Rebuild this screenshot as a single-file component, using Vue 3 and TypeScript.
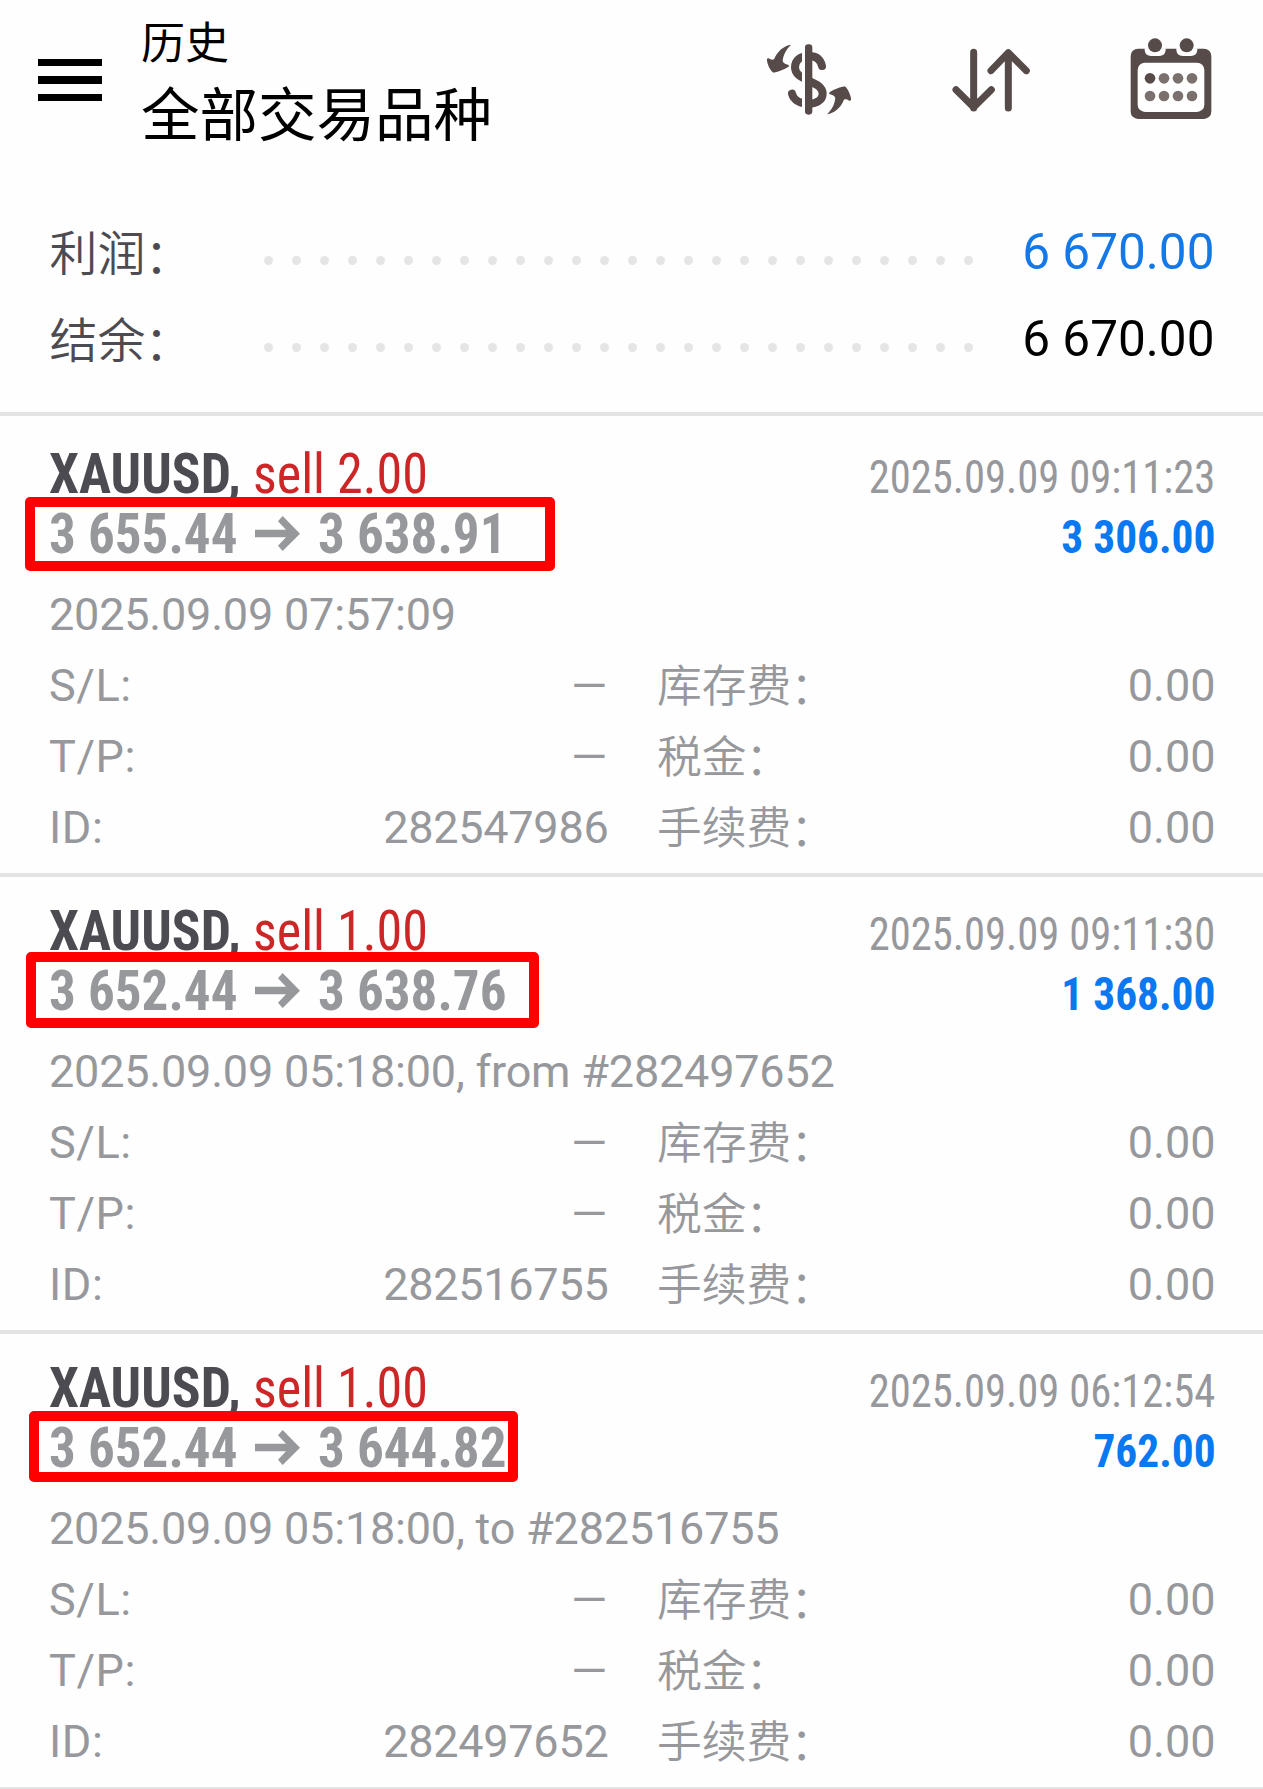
<script setup lang="ts">
interface Mark { left: number; top: number; width: number; height: number }
interface Deal {
  symbol: string
  action: string
  closeTime: string
  open: string
  close: string
  profit: string
  note: string
  id: string
  mark: Mark
}

const summary = [
  { label: '利润', value: '6 670.00', tone: 'blue' },
  { label: '结余', value: '6 670.00', tone: 'black' },
]

const deals: Deal[] = [
  {
    symbol: 'XAUUSD,', action: 'sell 2.00', closeTime: '2025.09.09 09:11:23',
    open: '3 655.44', close: '3 638.91', profit: '3 306.00',
    note: '2025.09.09 07:57:09', id: '282547986',
    mark: { left: 25, top: 77.3, width: 530, height: 74 },
  },
  {
    symbol: 'XAUUSD,', action: 'sell 1.00', closeTime: '2025.09.09 09:11:30',
    open: '3 652.44', close: '3 638.76', profit: '1 368.00',
    note: '2025.09.09 05:18:00, from #282497652', id: '282516755',
    mark: { left: 26.3, top: 75, width: 513, height: 76.3 },
  },
  {
    symbol: 'XAUUSD,', action: 'sell 1.00', closeTime: '2025.09.09 06:12:54',
    open: '3 652.44', close: '3 644.82', profit: '762.00',
    note: '2025.09.09 05:18:00, to #282516755', id: '282497652',
    mark: { left: 29, top: 76.7, width: 489.3, height: 71.3 },
  },
]

const details = (d: Deal) => [
  { k: 'S/L:', v: '—', k2: '库存费', v2: '0.00' },
  { k: 'T/P:', v: '—', k2: '税金', v2: '0.00' },
  { k: 'ID:', v: d.id, k2: '手续费', v2: '0.00' },
]

const markStyle = (m: Mark) => ({
  left: m.left + 'px', top: m.top + 'px', width: m.width + 'px', height: m.height + 'px',
})
</script>

<template>
  <div class="page">
    <header class="header">
      <div class="burger"><i></i><i></i><i></i></div>
      <div class="titles">
        <div class="sub">历史</div>
        <div class="main">全部交易品种</div>
      </div>
      <svg class="ic-money" viewBox="78 70 260 220">
        <path d="M246 139C241 116 224 109 207 109C180 109 165 122 165 143C165 165 185 173 207 184C232 195 248 203 248 222C248 241 230 252 207 252C180 252 161 241 156 222" fill="none" stroke="#564b48" stroke-width="24" stroke-linecap="round" />
        <rect x="186" y="90" width="15" height="180" fill="#fff" />
        <rect x="195" y="74" width="22" height="211" rx="10" fill="#564b48" />
        <g fill="#564b48">
          <path d="M153 75C132 78 112 94 102 119C97 122 90 119 86 116C82 114 80 118 81 123C83 135 88 146 95 155C98 159 102 159 106 158C118 156 131 150 143 143C148 140 148 137 144 135C137 133 130 131 128 124C130 105 138 90 153 75Z" />
          <path transform="rotate(180 207 179.5)" d="M153 75C132 78 112 94 102 119C97 122 90 119 86 116C82 114 80 118 81 123C83 135 88 146 95 155C98 159 102 159 106 158C118 156 131 150 143 143C148 140 148 137 144 135C137 133 130 131 128 124C130 105 138 90 153 75Z" />
        </g>
      </svg>
      <svg class="ic-sort" viewBox="630 80 250 200">
        <g fill="none" stroke="#564b48" stroke-width="21" stroke-linecap="round" stroke-linejoin="round">
          <path d="M701 96V263M648 208L701 261L754 208" />
          <path d="M805 263V97M753 151L805 97L859 151" />
        </g>
      </svg>
      <svg class="ic-cal" viewBox="1168 50 252 250">
        <rect x="1173" y="85" width="242" height="211" rx="22" fill="#564b48" />
        <rect x="1194" y="127" width="200" height="148" rx="22" fill="#fff" />
        <path d="M1215 84V90Q1217 107 1234 107H1259Q1276 107 1278 90V84ZM1310 84V90Q1312 107 1329 107H1354Q1371 107 1373 90V84Z" fill="#fff" />
        <g fill="#564b48">
          <circle cx="1246" cy="75" r="21" />
          <circle cx="1341" cy="75" r="21" />
          <circle cx="1231" cy="174" r="16" />
        </g>
        <g fill="#7a706d">
          <circle v-for="x in [1273, 1315, 1357]" :key="x" :cx="x" cy="174" r="16" />
          <circle v-for="x in [1231, 1273, 1315, 1357]" :key="'b' + x" :cx="x" cy="227" r="16" />
        </g>
      </svg>
    </header>

    <section class="summary">
      <div v-for="s in summary" :key="s.label" class="sum-row">
        <span class="sum-label cjk">{{ s.label }}<span class="colon">：</span></span>
        <span class="dots"><i v-for="n in 26" :key="n"></i></span>
        <span class="sum-value" :class="s.tone">{{ s.value }}</span>
      </div>
    </section>

    <article v-for="d in deals" :key="d.id" class="deal">
      <div class="line">
        <span class="symbol">{{ d.symbol }}</span>
        <span class="action">{{ d.action }}</span>
        <span class="time">{{ d.closeTime }}</span>
      </div>
      <div class="line">
        <span class="price">{{ d.open }}</span>
        <svg class="arrow" viewBox="675 227 135 105">
          <path d="M758 227L810 280L758 332L744 316L768 291H675V268H768L744 243Z" fill="#96989c" />
        </svg>
        <span class="price">{{ d.close }}</span>
        <span class="profit">{{ d.profit }}</span>
      </div>
      <div class="note">{{ d.note }}</div>
      <div v-for="r in details(d)" :key="r.k" class="detail">
        <span class="left">
          <span class="key">{{ r.k }}</span>
          <span :class="r.v === '—' ? 'dash' : 'id'">{{ r.v }}</span>
        </span>
        <span class="right">
          <span class="cjk">{{ r.k2 }}<span class="colon">：</span></span>
          <span>{{ r.v2 }}</span>
        </span>
      </div>
      <div class="mark" :style="markStyle(d.mark)"></div>
    </article>
  </div>
</template>

<style>
body { margin: 0; background: #fefefe; }
</style>

<style scoped>
.page {
  width: 1263px;
  height: 1789px;
  overflow: hidden;
  background: #fefefe;
  font-family: Roboto, "Noto Sans CJK SC", sans-serif;
  color: #96989c;
  white-space: nowrap;
}
.header {
  display: flex;
  align-items: flex-start;
  height: 208.6px;
}
.burger {
  display: flex;
  flex-direction: column;
  gap: 10.3px;
  margin: 59px 0 0 38.3px;
  width: 63.4px;
}
.burger i { height: 7.2px; background: #000; }
.titles {
  margin-left: 39.3px;
  width: 625px;
  color: #000;
  font-family: "Noto Sans CJK SC", sans-serif;
}
.sub { font-size: 44px; line-height: 60px; margin-top: 10px; }
.main { font-size: 58.5px; line-height: 82px; }
.ic-money { width: 86.67px; height: 73.33px; margin-top: 43.33px; }
.ic-sort { width: 83.33px; height: 66.67px; margin: 46.67px 0 0 97.33px; }
.ic-cal { width: 84px; height: 83.33px; margin: 36.67px 0 0 96px; }

.summary {
  height: 203.4px;
  border-bottom: 4px solid #e4e4e4;
  margin-bottom: 4px;
}
.sum-row {
  display: flex;
  align-items: center;
  height: 87px;
  line-height: 87px;
  padding: 0 48.5px 0 49.5px;
  font-size: 49.5px;
}
.cjk { position: relative; top: 1px; font-weight: 350; font-size: 44.8px; }
.colon { position: relative; top: 2.5px; left: -1px; }
.sum-label { width: 214.5px; color: #4c4b52; font-size: 48px; top: 2px; }
.dots { display: flex; gap: 19px; padding-top: 16.6px; }
.dots i { width: 9px; height: 9px; border-radius: 50%; background: #e5e5e5; }
.sum-value { margin-left: auto; }
.blue { color: #1478e6; }
.black { color: #000; }

.deal {
  position: relative;
  box-sizing: border-box;
  height: 457px;
  padding: 24.5px 47.5px 0 49px;
  border-bottom: 4px solid #e4e4e4;
  font-size: 45px;
}
.line {
  display: flex;
  align-items: baseline;
  height: 60px;
  line-height: 60px;
}
.symbol, .action, .price, .time, .profit {
  font-family: "Roboto Condensed", Roboto, sans-serif;
  font-stretch: 75%;
}
.symbol, .action, .price { font-size: 56px; transform-origin: left; }
.symbol { width: 204px; font-weight: 700; color: #4c4b52; transform: scaleX(0.957); }
.action { color: #cc2627; transform: scaleX(0.93); }
.price { width: 206px; font-weight: 700; transform: scaleX(0.947); }
.arrow { width: 45px; height: 35px; align-self: flex-start; margin: 11.2px 18px 0 0; }
.time, .profit { margin-left: auto; font-size: 46px; transform-origin: right; }
.time { transform: scaleX(0.926); }
.profit { font-weight: 700; color: #0a78f0; transform: scaleX(0.943); }
.note { margin-top: 14.5px; height: 71px; line-height: 71px; letter-spacing: -0.2px; }
.detail { display: flex; height: 71px; line-height: 71px; }
.left { display: flex; justify-content: space-between; width: 559.5px; }
.key { letter-spacing: 0.6px; }
.id { letter-spacing: -0.25px; }
.dash { transform: scaleX(1.03); transform-origin: right; margin-right: 1px; }
.right { display: flex; flex: 1; justify-content: space-between; margin-left: 48.5px; }
.mark {
  position: absolute;
  box-sizing: border-box;
  border: 10px solid #ff0000;
  border-radius: 5px;
}
</style>
